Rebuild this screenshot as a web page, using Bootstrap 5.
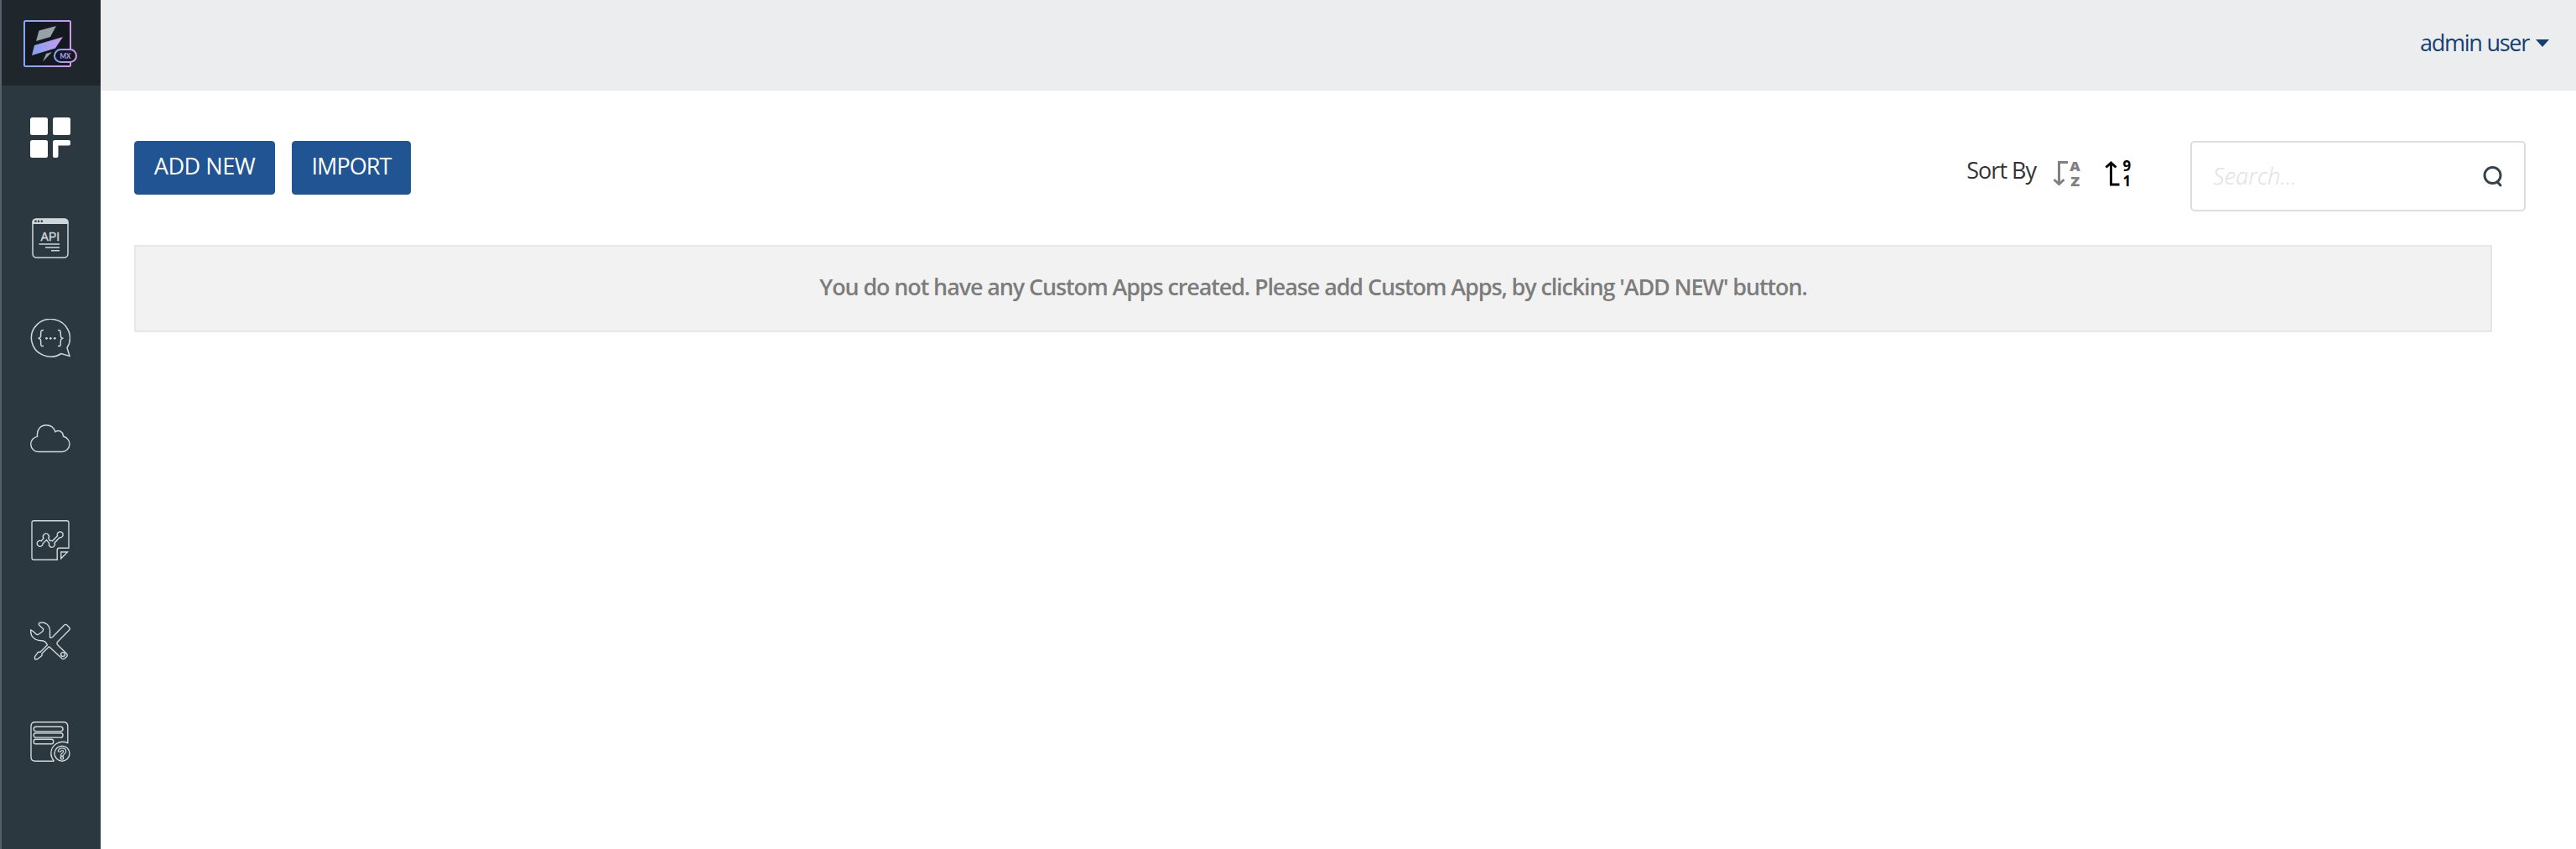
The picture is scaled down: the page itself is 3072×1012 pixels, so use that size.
<!DOCTYPE html>
<html lang="en">
<head>
<meta charset="utf-8">
<meta name="viewport" content="width=device-width, initial-scale=1">
<title>Custom Apps</title>
<link href="https://cdn.jsdelivr.net/npm/bootstrap@5.3.0/dist/css/bootstrap.min.css" rel="stylesheet">
<style>
  body { font-family: "Open Sans", "Noto Sans", sans-serif; font-size: 27px; line-height: 38px; color: #333; background: #fff; }
  .side-menu { width: 120px; background: #2b3840; border-left: 2px solid #56606a; }
  .side-logo { height: 102px; padding: 24px 0 0 26px; background: #1f272d; }
  .side-menu .nav-link { height: 120px; padding: 38px 0 0 34px; color: #d0d6da; }
  .side-menu .nav-link + .nav-link { padding-top: 38px; }
  .side-menu svg { display: block; fill: none; stroke: currentColor; }
  .top-bar { height: 108px; padding: 32px 32px 0 0; background: #ecedef; }
  .user-link { color: #143f74; letter-spacing: -1.25px; text-decoration: none; }
  .user-link::after { border-top-width: 9px; border-left-width: 8px; border-right-width: 8px; margin-left: 8px; vertical-align: 5px; letter-spacing: 0; }
  .page-body { padding: 60px 60px 0 40px; }
  .btn-action { --bs-btn-color: #fff; --bs-btn-bg: #205493; --bs-btn-border-color: #205493; --bs-btn-hover-color: #fff; --bs-btn-hover-bg: #143f74; height: 64px; padding: 9px 0 13px; font-size: 27px; line-height: 38px; border-radius: 4px; }
  .btn-new { width: 168px; letter-spacing: -.45px; }
  .btn-import { width: 142px; margin-left: 20px; letter-spacing: -.9px; }
  .sort-label { letter-spacing: -1px; padding-top: 16px; margin-right: 19px; }
  .sort-icon { display: block; margin-top: 19px; }
  .search-box { width: 400px; height: 84px; margin-left: 69px; border: 2px solid #ddd; border-radius: 5px; }
  .search-box .form-control { padding: 0 0 0 25px; border: 0; background: transparent; font-size: 27px; letter-spacing: .2px; }
  .search-box .form-control::placeholder { color: #dedede; opacity: 1; font-style: italic; font-weight: 300; }
  .empty-note { height: 104px; margin: 40px 40px 0 0; padding: 29px 0 0; border: 2px solid #e6e6e6; border-radius: 0; background: #f2f2f2; color: #7c7c7c; font-size: 27px; font-weight: 600; letter-spacing: -1.13px; }
</style>
</head>
<body>
<div class="d-flex vh-100 overflow-hidden">
  <aside class="side-menu d-flex flex-column flex-shrink-0">
    <a class="side-logo d-block" href="#" aria-label="Home">
      <svg width="66" height="58" viewBox="0 0 66 58">
        <defs>
          <linearGradient id="brand" x1="0" y1="0" x2="1" y2="0"><stop offset="0" stop-color="#84a6f4"/><stop offset="1" stop-color="#cf98ec"/></linearGradient>
          <linearGradient id="bolt" x1="0" y1="0" x2="1" y2="0"><stop offset="0" stop-color="#84a0ee"/><stop offset="1" stop-color="#c79bf0"/></linearGradient>
        </defs>
        <rect x="1" y="1" width="55" height="54" rx="1.5" fill="#14181f" stroke="url(#brand)" stroke-width="2"/>
        <path d="M18.500 12.500L39 7L32 20L15 25Z" fill="#95a2aa" stroke="none"/>
        <path d="M13 30L47 20L38 33.500L10 42Z" fill="url(#bolt)" stroke="none"/>
        <path d="M27 40L34 38L23 49.500Z" fill="#95a2aa" stroke="none"/>
        <rect x="37" y="35" width="26" height="15" rx="7.500" fill="#14181f" stroke="url(#brand)" stroke-width="2"/>
        <text x="43.500" y="45.800" fill="#a69cf0" stroke="none" font-family="Lato, sans-serif" font-weight="900" font-size="8.500" textLength="13" lengthAdjust="spacingAndGlyphs">MX</text>
      </svg>
    </a>
    <nav class="nav flex-column flex-nowrap">
      <a class="nav-link" href="#" aria-label="Apps">
        <svg width="48" height="48" viewBox="0 0 48 48"><g fill="#fff" stroke="none"><rect width="21" height="21" rx="2.500"/><rect x="27" width="21" height="21" rx="2.500"/><rect y="27" width="21" height="21" rx="2.500"/><path d="M29.500 27H46Q48 27 48 29V31.500Q48 33.500 46 33.500H33.500V45.500Q33.500 48 31 48H29Q27 48 27 45.500V29.500Q27 27 29.500 27Z"/></g></svg>
      </a>
      <a class="nav-link" href="#" aria-label="API">
        <svg width="48" height="48" viewBox="0 0 48 48"><rect x="3" y="1" width="42" height="46" rx="4.500" stroke-width="1.500"/><path d="M2.500 7V4Q3 .5 6.500.5H41.500Q45 .5 45.500 4V7Z" fill="currentColor" stroke="none"/><g fill="#2b3840" stroke="none"><circle cx="6.500" cy="3.800" r="1.300"/><circle cx="10" cy="3.800" r="1.300"/><circle cx="13.800" cy="3.800" r="1.300"/></g><text x="12.600" y="26.800" fill="currentColor" stroke-width=".4" font-family="Liberation Sans, sans-serif" font-size="14.500" textLength="22.500" lengthAdjust="spacingAndGlyphs">API</text><path d="M10.500 31H35M18 35H35M25 38.700H35" stroke-width="1.500"/></svg>
      </a>
      <a class="nav-link" href="#" aria-label="Functions">
        <svg width="48" height="48" viewBox="0 0 48 48"><path d="M44 34.500A23 22.400 0 1 0 37 41.500L47 44.500Z" stroke-width="1.500"/><path d="M16 13.500C12.500 13.500 12.700 14.500 12.700 18C12.700 21.500 12.500 23 9.500 23.300C12.500 23.600 12.700 25 12.700 28.500C12.700 32 12.500 32.500 16 32.500M33 13.500C36.500 13.500 36.300 14.500 36.300 18C36.300 21.500 36.500 23 39.500 23.300C36.500 23.600 36.300 25 36.300 28.500C36.300 32 36.500 32.500 33 32.500" stroke-width="1.500"/><g fill="currentColor" stroke="none"><circle cx="19.500" cy="23.300" r="1.400"/><circle cx="24.300" cy="23.300" r="1.400"/><circle cx="29.300" cy="23.300" r="1.400"/></g></svg>
      </a>
      <a class="nav-link" href="#" aria-label="Cloud">
        <svg width="48" height="48" viewBox="0 0 48 48"><path d="M10 38.500A9.100 9.100 0 0 1 8.500 20.400C7.500 12 12.500 6.800 19 6.800C24.500 6.800 28.500 10 30 14.800C34.500 11.500 39.500 15 39.600 20.300A9.200 9.200 0 0 1 38 38.500Z" stroke-width="1.400"/></svg>
      </a>
      <a class="nav-link" href="#" aria-label="Reports">
        <svg width="48" height="48" viewBox="0 0 48 48" stroke-width="1.400"><path d="M33 47.200H4.500Q2 47.200 2 44.700V3.200Q2 .7 4.500.7H43.500Q46 .7 46 3.200V33.300H34.500Q32.200 33.300 32.200 35.500V47.200"/><path d="M36.800 38H44.500L36.800 45.700Z"/><path d="M13.400 24.800L16 21.500A3.500 3.500 0 1 1 21.800 21.500L23.600 24.600A3.600 3.600 0 0 1 26.500 24.800L32.500 18.800A3.500 3.500 0 1 1 35 20.800L29 27.200A3.500 3.500 0 1 1 22.600 27.700L19.500 23.500L15.200 27.800A3.500 3.500 0 1 1 13.400 24.800Z"/></svg>
      </a>
      <a class="nav-link" href="#" aria-label="Tools">
        <svg width="48" height="48" viewBox="0 0 48 48" stroke-width="1.400" stroke-linejoin="round"><path d="M11 2.500C17.500.5 24 5 23.500 13V19.800Q25 20.600 27 19L40.500 5.200Q42 3.700 43.800 5L46.500 7.700Q48 9.400 46.500 11L33 24.800Q31 27 33 29L43.500 39.300Q45 41 43.500 42.700L41 45Q39 46.300 37.500 44.600L22.500 30.800L14 39V41.500L8.500 45.800H5.500V42.800L9.500 37.200H12L20.500 28.800Q18.500 24.500 15 23.700C5.500 24.500-.5 18 .8 10.800L3.500 12.500L7.500 16.200L9.500 16.500L15 12.500L15.700 9.800L11 5.500Q9.500 4 11 2.500Z"/><circle cx="39" cy="40" r="2.400"/></svg>
      </a>
      <a class="nav-link" href="#" aria-label="Help">
        <svg width="48" height="48" viewBox="0 0 48 48" stroke-width="1.400"><path d="M28.500 47.200H6Q1 47.200 1 42.200V5.700Q1 .7 6 .7H39.500Q44.800.7 44.800 5.700V25.500C35 21.500 25 28 24.800 38Q24.900 43 28.500 47.200"/><rect x="4.200" y="6.200" width="34.800" height="5.500" rx="2.700"/><rect x="4.200" y="13.800" width="34.800" height="5.500" rx="2.700"/><rect x="4.200" y="21.300" width="23.500" height="5.500" rx="2.200"/><path d="M7 11.900H36M7 13.700H36M7 19.300H36" stroke="#a4adb5"/><circle cx="38" cy="38.200" r="9"/><path d="M33.300 35.800C33 30.800 42.500 30.500 42.700 35.500C42.700 38.200 39.500 38.500 39.500 41H36.300C36.200 37.800 39.700 37.500 39.700 35.800C39.600 34 36.500 34.300 36.300 36Z" stroke-width="1.200"/><circle cx="37.900" cy="43.400" r="1.700"/></svg>
      </a>
    </nav>
  </aside>
  <div class="flex-grow-1 d-flex flex-column">
    <header class="top-bar d-flex justify-content-end align-items-start">
      <a class="user-link dropdown-toggle" href="#" data-bs-toggle="dropdown">admin user</a>
    </header>
    <main class="page-body">
      <div class="d-flex align-items-start">
        <button class="btn btn-action btn-new" type="button">ADD NEW</button>
        <button class="btn btn-action btn-import" type="button">IMPORT</button>
        <div class="d-flex align-items-start ms-auto">
          <span class="sort-label">Sort By</span>
          <svg class="sort-icon" width="34" height="38" viewBox="0 0 34 38" fill="none" stroke="#808080"><path d="M19 6.500H8.500V32M2.500 27L8.500 32.500L14.500 27" stroke-width="3"/><g fill="#808080" stroke="none" font-family="Open Sans, sans-serif" font-weight="800" font-size="16.500"><text x="21.200" y="17" textLength="12.500" lengthAdjust="spacingAndGlyphs">A</text><text x="22.300" y="34.500" textLength="11" lengthAdjust="spacingAndGlyphs">Z</text></g></svg>
          <svg class="sort-icon" width="62" height="38" viewBox="-28 0 62 38" fill="none" stroke="#000"><path d="M18.500 33H8.500V7M2.500 12.500L8.500 7L14.500 12.500" stroke-width="3"/><g fill="#000" stroke="none" font-family="Open Sans, sans-serif" font-weight="700" font-size="17"><text x="22.500" y="17.200">9</text><text x="22.500" y="34.500">1</text></g></svg>
          <div class="search-box d-flex align-items-center">
            <input class="form-control shadow-none" type="text" placeholder="Search..." aria-label="Search">
            <svg class="flex-shrink-0 me-4" width="26" height="28" viewBox="0 0 26 28" fill="none" stroke="#36434c" stroke-width="3" stroke-linecap="round"><circle cx="12.500" cy="13" r="9.500"/><path d="M18 20.500L22 25"/></svg>
          </div>
        </div>
      </div>
      <div class="alert empty-note text-center">You do not have any Custom Apps created. Please add Custom Apps, by clicking 'ADD NEW' button.</div>
    </main>
  </div>
</div>
<script src="https://cdn.jsdelivr.net/npm/bootstrap@5.3.0/dist/js/bootstrap.bundle.min.js"></script>
</body>
</html>
